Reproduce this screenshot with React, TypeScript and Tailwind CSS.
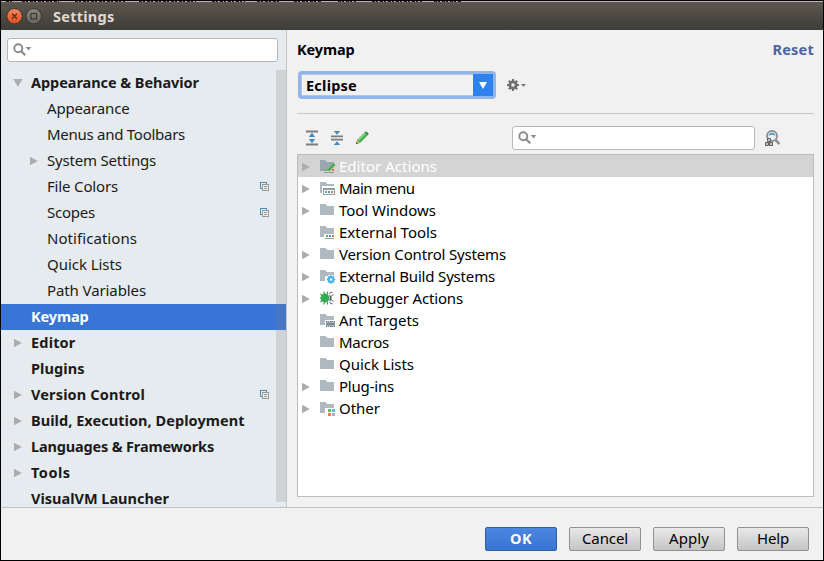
import { useLayoutEffect, useRef, useState } from 'react';
import type { ReactNode } from 'react';

/* Text spread over a fixed advance width through its letter spacing. */
function Label({ text, width, className = '' }: { text: string; width: number; className?: string }) {
  const ref = useRef<HTMLSpanElement>(null);
  const [spacing, setSpacing] = useState(0);
  useLayoutEffect(() => {
    if (ref.current) {
      const natural = ref.current.getBoundingClientRect().width;
      setSpacing((s) => s + (width - natural) / text.length);
    }
  }, [text, width]);
  return (
    <span ref={ref} className={`whitespace-nowrap ${className}`} style={{ letterSpacing: `${spacing}px` }}>
      {text}
    </span>
  );
}

function Arrow({ open = false }: { open?: boolean }) {
  return (
    <svg width="10" height="10" viewBox="0 0 10 10" className="shrink-0" fill="#adadad">
      {open ? <path d="M.3 1h9.2L5 9z" /> : <path d="M1 .8v8.4L8.8 5z" />}
    </svg>
  );
}

function CopyIcon() {
  return (
    <svg width="10" height="10" viewBox="0 0 10 10" className="shrink-0" fill="none" shapeRendering="crispEdges">
      <path d="M2 6.5H.5v-6h6V2" stroke="#4a90b8" />
      <rect x="2.5" y="2.5" width="6" height="6" fill="#eee" stroke="#999" />
      <path d="M4 4.5h3M4 6.5h3" stroke="#999" />
    </svg>
  );
}

function SearchGlyph() {
  return (
    <svg width="20" height="14" viewBox="0 0 20 14" className="shrink-0">
      <circle cx="5.3" cy="5.2" r="4" fill="none" stroke="#8c8c8c" strokeWidth="1.9" />
      <path d="M8.2 8.2l4 4" stroke="#8c8c8c" strokeWidth="2.3" />
      <path d="M12.7 4h5.6l-2.8 3.5z" fill="#8c8c8c" />
    </svg>
  );
}

interface NavItem {
  text: string;
  width: number;
  level: 0 | 1;
  arrow?: 'open' | 'closed';
  copy?: boolean;
  selected?: boolean;
}

const nav: NavItem[] = [
  { text: 'Appearance & Behavior', width: 168, level: 0, arrow: 'open' },
  { text: 'Appearance', width: 82.5, level: 1 },
  { text: 'Menus and Toolbars', width: 138, level: 1 },
  { text: 'System Settings', width: 109, level: 1, arrow: 'closed' },
  { text: 'File Colors', width: 71, level: 1, copy: true },
  { text: 'Scopes', width: 48, level: 1, copy: true },
  { text: 'Notifications', width: 90, level: 1 },
  { text: 'Quick Lists', width: 75, level: 1 },
  { text: 'Path Variables', width: 99, level: 1 },
  { text: 'Keymap', width: 57.5, level: 0, selected: true },
  { text: 'Editor', width: 44.5, level: 0, arrow: 'closed' },
  { text: 'Plugins', width: 53.5, level: 0 },
  { text: 'Version Control', width: 114, level: 0, arrow: 'closed', copy: true },
  { text: 'Build, Execution, Deployment', width: 213.5, level: 0, arrow: 'closed' },
  { text: 'Languages & Frameworks', width: 183, level: 0, arrow: 'closed' },
  { text: 'Tools', width: 39.5, level: 0, arrow: 'closed' },
  { text: 'VisualVM Launcher', width: 138, level: 0 },
];

function NavRow({ item }: { item: NavItem }) {
  return (
    <div
      className={`flex h-[26px] shrink-0 items-center pr-[16px] ${item.level ? 'pl-[28px] text-[15px]' : 'pl-[12px]'} ${
        item.selected ? 'bg-[#3875d7] text-white' : 'text-[#1a1a1a]'
      }`}
    >
      <span className="flex w-[18px] shrink-0">{item.arrow && <Arrow open={item.arrow === 'open'} />}</span>
      <Label text={item.text} width={item.width} className={`pb-[2px] ${item.level ? '' : 'font-bold'}`} />
      {item.copy && (
        <span className="ml-auto flex">
          <CopyIcon />
        </span>
      )}
    </div>
  );
}

const folder = 'M0 1h5l2 2h7v9H0z';
const cutFolder = 'M0 1h5l2 2h7v4H5v5H0z';

const badges: Record<string, ReactNode> = {
  plain: <path d={folder} fill="#aeb9c0" />,
  edit: (
    <>
      <path d="M0 1h5l2 2h7v3l-6 6H0z" fill="#9ba7b0" />
      <path d="M8.5 11.5l6-6.5" stroke="#4fae4b" strokeWidth="2.6" />
      <path d="M5 10h2v2H5z" fill="#56b957" />
      <path d="M12 10h2v2h-2z" fill="#e66b43" />
      <path d="M4 13h10v1H4z" fill="#8e9aa3" />
    </>
  ),
  menu: (
    <>
      <path d="M0 1h5l2 2h7v2H2v7H0z" fill="#aeb9c0" />
      <path d="M3 7h12v7H3z" fill="#93a0aa" />
      <path d="M4 9h10v4H4z" fill="#fff" />
      <path d="M5 10h2v2H5z" fill="#59ba57" />
      <path d="M8 10h2v2H8z" fill="#429fd5" />
      <path d="M11 10h2v2h-2z" fill="#ed6f45" />
    </>
  ),
  tools: (
    <>
      <path d="M0 1h5l2 2h7v6H4v3H0z" fill="#aeb9c0" />
      <path d="M6 10h2v2H6z" fill="#59ba57" />
      <path d="M9 10h2v2H9z" fill="#429fd5" />
      <path d="M12 10h2v2h-2z" fill="#ed6f45" />
      <path d="M5 13h9v1H5z" fill="#93a0aa" />
    </>
  ),
  gear: (
    <>
      <path d={cutFolder} fill="#aeb9c0" />
      <g transform="translate(11 10.5)">
        <circle r="4.8" fill="#fff" />
        <circle r="2.4" fill="none" stroke="#4ab2ea" strokeWidth="2.2" />
        <path d="M0-4.2v8.4M-4.2 0h8.4M-3-3l6 6M3-3l-6 6" stroke="#4ab2ea" strokeWidth="1.7" />
        <circle r="1.3" fill="#fff" />
      </g>
    </>
  ),
  bug: (
    <g transform="translate(0 .5)">
      <path
        d="M3.5 0l1.5 3M7.5 0v3M3.5 13L5 10M7.5 13v-3M.5 2.5L3 5M.5 10.5L3 8M0 6.5h3"
        stroke="#3c9a4b"
        fill="none"
        strokeWidth="1.1"
      />
      <path d="M9.5 2.5l1.2-1.7h1.8M9.5 10.5l1.2 1.7h1.8" stroke="#5a5a5a" fill="none" />
      <ellipse cx="5" cy="6.5" rx="4.4" ry="4.4" fill="#30ac51" />
      <path d="M9.2 3.2c3.2.4 3.2 6.2 0 6.6.9-2.2.9-4.4 0-6.6z" fill="#555" />
      <path d="M11 5l2.5-2M11 8l2.5 2" stroke="#666" />
    </g>
  ),
  ant: (
    <>
      <path d={cutFolder} fill="#aeb9c0" />
      <path d="M6 8h9v6H6z" fill="#b8c2c9" />
      <path d="M7 11h7" stroke="#71828d" strokeWidth="2" />
      <path d="M6 8.5h9M6 13.5h9" stroke="#71828d" strokeDasharray="1 1" />
      <path d="M6.5 9v4M8.5 8v6M11.5 8v6M14.5 9v4" stroke="#8a98a3" />
    </>
  ),
  other: (
    <>
      <path d={cutFolder} fill="#aeb9c0" />
      <path d="M7 7h8v8H7z" fill="#fff" />
      <path d="M8 8h3v3H8z" fill="#5abf62" />
      <path d="M12 8h3v3h-3z" fill="#62b5e5" />
      <path d="M8 12h3v3H8z" fill="#f2774c" />
      <path d="M12 12h3v3h-3z" fill="#a9b5bd" />
    </>
  ),
};

const smooth = new Set(['gear', 'bug', 'edit']);

const actions = [
  { text: 'Editor Actions', width: 98, icon: 'edit', arrow: true, selected: true },
  { text: 'Main menu', width: 75.5, icon: 'menu', arrow: true },
  { text: 'Tool Windows', width: 97, icon: 'plain', arrow: true },
  { text: 'External Tools', width: 98, icon: 'tools' },
  { text: 'Version Control Systems', width: 167, icon: 'plain', arrow: true },
  { text: 'External Build Systems', width: 156, icon: 'gear', arrow: true },
  { text: 'Debugger Actions', width: 124, icon: 'bug', arrow: true },
  { text: 'Ant Targets', width: 80, icon: 'ant' },
  { text: 'Macros', width: 50, icon: 'plain' },
  { text: 'Quick Lists', width: 75, icon: 'plain' },
  { text: 'Plug-ins', width: 55, icon: 'plain', arrow: true },
  { text: 'Other', width: 41, icon: 'other', arrow: true },
];

const buttons = [
  { text: 'OK', width: 22, primary: true },
  { text: 'Cancel', width: 46 },
  { text: 'Apply', width: 40 },
  { text: 'Help', width: 32 },
];

function TitleBar() {
  return (
    <>
      <svg width="822" height="1" viewBox="1 0 822 1" className="block shrink-0" shapeRendering="crispEdges">
        <path d="M1 .5h822" stroke="#b9b3b8" />
        <path
          d="M6 .5h7M22 .5h37M75 .5h50M139 .5h57M212 .5h33M257 .5h22M294 .5h28M338 .5h18M372 .5h50M434 .5h27"
          stroke="#24202c"
          strokeDasharray="3 1 2 2"
        />
      </svg>
      <div className="flex h-[28px] shrink-0 items-center bg-linear-to-b from-[#5d574e] to-[#3e3d38] pl-[5px]">
        <svg width="37" height="18" viewBox="0 0 37 18" className="shrink-0">
          <defs>
            <linearGradient id="close" x2="0" y2="1">
              <stop stopColor="#f58a63" />
              <stop offset="1" stopColor="#df4c1d" />
            </linearGradient>
            <linearGradient id="max" x2="0" y2="1">
              <stop stopColor="#8a877e" />
              <stop offset="1" stopColor="#64625b" />
            </linearGradient>
          </defs>
          <circle cx="8.5" cy="9.2" r="7.7" fill="url(#close)" stroke="#393630" />
          <path d="M6 6.7l5 5M11 6.7l-5 5" stroke="#5c2b19" strokeWidth="1.4" />
          <circle cx="27.7" cy="9.2" r="7.7" fill="url(#max)" stroke="#393630" />
          <rect x="25" y="6.5" width="5.5" height="5.5" fill="none" stroke="#3b3933" strokeWidth="1.2" />
        </svg>
        <Label text="Settings" width={61.5} className="ml-[10px] font-bold text-[#dfdbd2]" />
      </div>
    </>
  );
}

function Toolbar() {
  return (
    <div className="flex h-[24px] items-center pl-[8px]">
      <svg width="14" height="16" viewBox="0 0 14 16" className="shrink-0">
        <path d="M1 1.5h12M1 14.5h12" stroke="#7d7d7d" strokeWidth="1.8" />
        <path d="M7 2.8l3.2 4.2H3.8zM7 13.2L10.2 9H3.8z" fill="#4289bd" />
      </svg>
      <svg width="14" height="16" viewBox="0 0 14 16" className="ml-[11px] shrink-0">
        <path d="M1 6.4h12M1 9.7h12" stroke="#7d7d7d" strokeWidth="1.8" />
        <path d="M3.8 1h6.4L7 4.8zM3.8 15h6.4L7 11.2z" fill="#4289bd" />
      </svg>
      <svg width="14" height="14" viewBox="0 0 14 14" className="ml-[11px] shrink-0">
        <path d="M1 13l1-4 7.5-7.5 3 3L5 12z" fill="#43b050" />
        <path d="M3.3 9.3l7.5-7.5" stroke="#8bd88f" strokeWidth="1.5" />
        <path d="M1 13l1-4 3 3z" fill="#f0b36c" />
        <path d="M1 13l.5-2 1.5 1.5z" fill="#333" />
        <path d="M9.5 1.5l1-1c1-.6 3.6 1.7 3 3l-1 1z" fill="#348d40" />
      </svg>
      <div className="ml-[143px] flex h-[24px] w-[243px] items-center rounded-[3px] border border-[#b8b8b8] bg-white pl-[5px]">
        <SearchGlyph />
      </div>
      <svg width="17" height="17" viewBox="0 0 17 17" className="ml-[9px] shrink-0">
        <circle cx="8" cy="6" r="5" fill="#eaf3f8" stroke="#919191" strokeWidth="1.9" />
        <path d="M4.6 6c.3-4.4 6.5-4.4 6.8 0-1.8-1.6-5-1.6-6.8 0z" fill="#4b9aca" />
        <path d="M11.5 10l4 4.2" stroke="#919191" strokeWidth="2.6" />
        <path d="M3.5 8.5h3v3h-3zM1.5 12.5h3v3h-3zM5.5 12.5h3v3h-3z" fill="#c6c6c6" stroke="#5e5e5e" />
      </svg>
    </div>
  );
}

export default function App() {
  return (
    <div className="flex h-[561px] w-[824px] flex-col overflow-hidden border border-black bg-[#f1f1f1] font-['Noto_Sans','Open_Sans',sans-serif] text-[14.5px] leading-[22px] text-black">
      <TitleBar />
      <div className="flex h-[478px] shrink-0 border-b border-[#bfc1c3]">
        <aside className="flex w-[286px] shrink-0 flex-col overflow-hidden border-r border-[#c4c4c4] bg-[#e6ebef]">
          <div className="ml-[6px] mt-[8px] flex h-[24px] w-[271px] shrink-0 items-center rounded-[3px] border border-[#b8b8b8] bg-white pl-[5px]">
            <SearchGlyph />
          </div>
          <div className="relative mt-[8px] flex min-h-0 flex-1 flex-col overflow-hidden">
            {nav.map((item) => (
              <NavRow key={item.text} item={item} />
            ))}
            <div className="absolute right-0 top-0 h-[432px] w-[10px] bg-[#808080]/22" />
          </div>
        </aside>
        <main className="flex min-w-0 flex-1 flex-col pl-[10px] pr-[9px]">
          <div className="mt-[8px] flex h-[22px] shrink-0 items-center justify-between font-bold">
            <Label text="Keymap" width={57.5} />
            <Label text="Reset" width={41.5} className="text-[#4a64a4]" />
          </div>
          <div className="mt-[11px] flex h-[28px] shrink-0 items-center pl-px">
            <div className="flex h-[28px] w-[198px] items-stretch rounded-[4px] border-[3px] border-[#8fb5ec]">
              <div className="flex flex-1 items-center border border-r-0 border-[#b9c4d4] pl-[4px] font-bold">
                <Label text="Eclipse" width={51} />
              </div>
              <div className="flex w-[20px] items-center justify-center bg-[#2f82ee]">
                <svg width="8" height="7" viewBox="0 0 8 7">
                  <path d="M0 0h8L4 7z" fill="#fff" />
                </svg>
              </div>
            </div>
            <svg width="20" height="12" viewBox="0 0 20 12" className="ml-[11px] shrink-0">
              <circle cx="6" cy="6" r="3.2" fill="none" stroke="#707070" strokeWidth="2.8" />
              <path
                d="M6 0v2.5M6 9.5V12M0 6h2.5M9.5 6H12M1.8 1.8l1.7 1.7M8.5 8.5l1.7 1.7M10.2 1.8L8.5 3.5M3.5 8.5l-1.7 1.7"
                stroke="#707070"
                strokeWidth="2"
              />
              <path d="M14 5h5l-2.5 2.7z" fill="#737373" />
            </svg>
          </div>
          <div className="mt-[14px] h-px shrink-0 bg-[#c9c9c9]" />
          <div className="mt-[12px] shrink-0">
            <Toolbar />
          </div>
          <div className="mt-[4px] flex h-[343px] w-[517px] shrink-0 flex-col border border-[#bdbdbd] bg-white text-[15px]">
            {actions.map((a) => (
              <div
                key={a.text}
                className={`flex h-[22px] shrink-0 items-center pl-[3px] ${a.selected ? 'bg-[#d4d4d4] text-white' : ''}`}
              >
                <span className="flex w-[19px] shrink-0 pt-px">{a.arrow && <Arrow />}</span>
                <svg
                  width="16"
                  height="16"
                  viewBox="0 0 16 16"
                  className="mt-px shrink-0"
                  shapeRendering={smooth.has(a.icon) ? 'auto' : 'crispEdges'}
                >
                  {badges[a.icon]}
                </svg>
                <Label text={a.text} width={a.width} className="ml-[3px]" />
              </div>
            ))}
          </div>
        </main>
      </div>
      <footer className="flex flex-1 items-start justify-end gap-[12px] pr-[14px] pt-[19px]">
        {buttons.map((b) => (
          <button
            key={b.text}
            className={`flex h-[24px] w-[72px] items-center justify-center rounded-[2px] border pb-[2px] ${
              b.primary
                ? 'border-[#30609f] bg-linear-to-b from-[#4b86e1] to-[#3874d2] font-bold text-white'
                : 'border-[#919191] bg-linear-to-b from-[#e9e9e9] to-[#c5c5c5] text-[15px]'
            }`}
          >
            <Label text={b.text} width={b.width} />
          </button>
        ))}
      </footer>
    </div>
  );
}
